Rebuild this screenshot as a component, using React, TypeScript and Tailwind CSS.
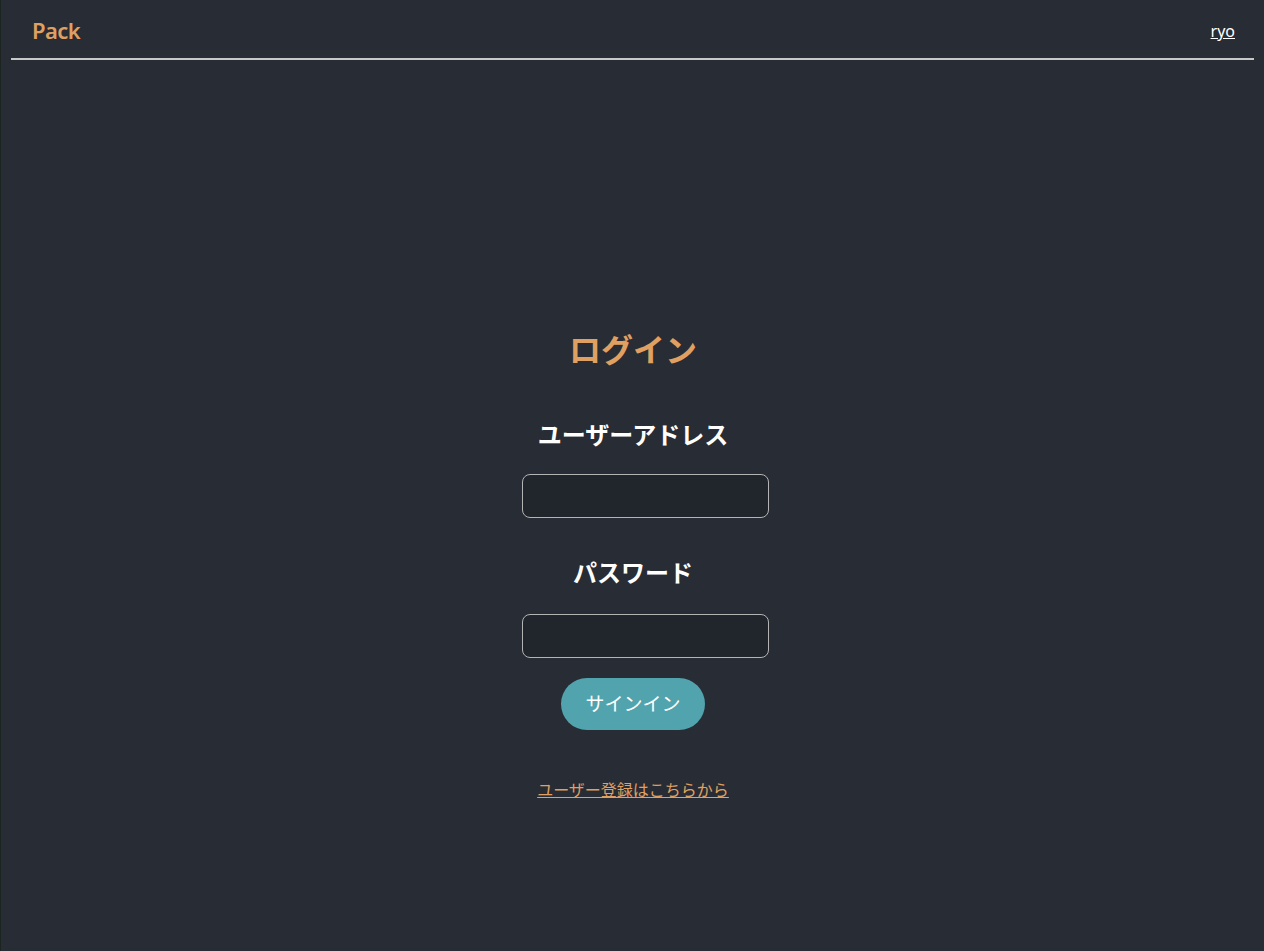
import { useState } from "react";

export default function App() {
  const [data, setData] = useState({ email: "", password: "" });

  return (
    <div className="min-h-screen bg-[#282c34] border-l border-[#1c2420] font-['Noto_Sans','Noto_Sans_CJK_JP',sans-serif]">
      <header className="mx-[10px] h-[60px] flex items-center justify-between border-b-2 border-[#c8c8c8] pl-[21px] pr-[19px] pt-[3px]">
        <span className="text-[22px] font-semibold text-[#e0a062] tracking-tight">Pack</span>
        <a href="#" className="text-[16px] text-white underline">ryo</a>
      </header>

      <main className="flex flex-col items-center pt-[266px] pl-[1px]">
        <h1 className="text-[32px] font-bold text-[#e0a062] leading-[48px]">ログイン</h1>
        <form className="flex flex-col items-center" onSubmit={(e) => e.preventDefault()}>
          <label htmlFor="email" className="mt-[43px] text-[24px] font-bold text-white leading-[36px]">
            ユーザーアドレス
          </label>
          <input
            id="email"
            type="email"
            value={data.email}
            onChange={(e) => setData({ ...data, email: e.target.value })}
            className="mt-[21px] ml-6 w-[247px] h-[44px] rounded-lg border border-[#b4b4b4] bg-[#21262d] text-white px-2 outline-none"
          />
          <label htmlFor="password" className="mt-[37px] text-[24px] font-bold text-white leading-[36px]">
            パスワード
          </label>
          <input
            id="password"
            type="password"
            value={data.password}
            onChange={(e) => setData({ ...data, password: e.target.value })}
            className="mt-[23px] ml-6 w-[247px] h-[44px] rounded-lg border border-[#b4b4b4] bg-[#21262d] text-white px-2 outline-none"
          />
          <button
            type="submit"
            className="mt-[20px] w-[144px] h-[52px] rounded-full bg-[#51a4ae] text-white text-[19px]"
          >
            サインイン
          </button>
        </form>
        <a href="#" className="mt-[48px] text-[16px] text-[#e0a062] underline">
          ユーザー登録はこちらから
        </a>
      </main>
    </div>
  );
}
